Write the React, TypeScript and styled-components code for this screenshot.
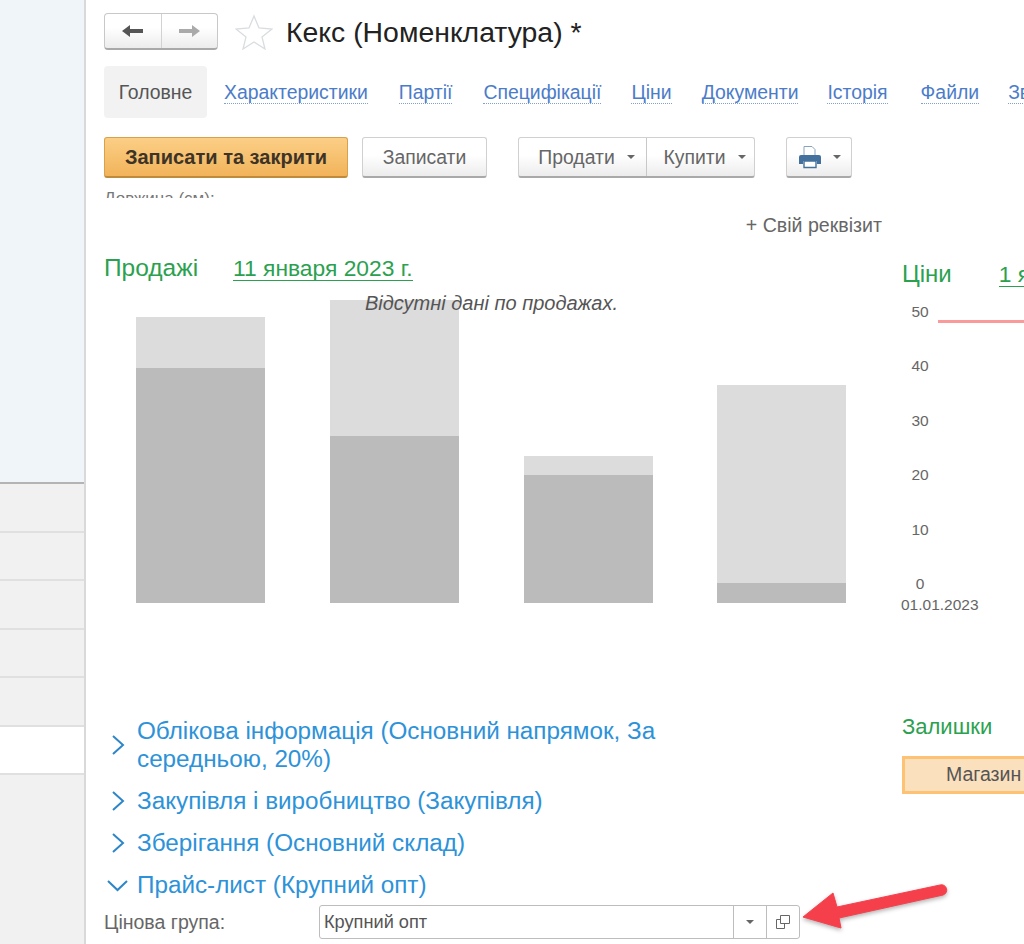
import React from "react";
import styled, { createGlobalStyle } from "styled-components";

const GlobalStyle = createGlobalStyle`
  html, body {
    margin: 0;
    padding: 0;
    background: #fff;
    font-family: "Liberation Sans", Arial, sans-serif;
  }
`;

const Page = styled.div`
  position: relative;
  display: flex;
  width: 1024px;
  height: 944px;
  overflow: hidden;
  background: #fff;
`;

const Sidebar = styled.aside`
  flex: 0 0 84px;
  display: flex;
  flex-direction: column;
  border-right: 2px solid #d9d9d9;
  background: #f1f1f1;
`;

const SidebarTop = styled.div`
  height: 482px;
  background: #eff5f9;
  border-bottom: 2px solid #b4b4b4;
`;

const SidebarRow = styled.div<{ $active?: boolean }>`
  height: 46.5px;
  background: ${(p) => (p.$active ? "#fff" : "#f1f1f1")};
  border-bottom: 2px solid #e0e0e0;
`;

const Main = styled.main`
  flex: 1;
  min-width: 0;
  padding: 13px 0 0 18px;
  display: flex;
  flex-direction: column;
`;

const Header = styled.header`
  display: flex;
  align-items: center;
  height: 37px;
`;

const NavGroup = styled.div`
  display: flex;
  width: 114px;
  height: 37px;
  box-sizing: border-box;
  border: 1px solid #c8c8c8;
  border-bottom: 2px solid #a9a9a9;
  border-radius: 4px;
  background: linear-gradient(#fff 40%, #ececec);
`;

const NavButton = styled.div`
  flex: 1;
  display: flex;
  align-items: center;
  justify-content: center;
  & + & {
    border-left: 1px solid #d2d2d2;
  }
`;

const StarIcon = styled.svg`
  margin-left: 17px;
  width: 38px;
  height: 36px;
`;

const Title = styled.h1`
  margin: 2px 0 0 13px;
  font-size: 28.4px;
  font-weight: 400;
  color: #222;
  white-space: nowrap;
`;

const Tabs = styled.nav`
  display: flex;
  align-items: center;
  margin-top: 16px;
  height: 52px;
  white-space: nowrap;
`;

const ActiveTab = styled.div`
  width: 103px;
  height: 52px;
  flex: none;
  display: flex;
  align-items: center;
  justify-content: center;
  border-radius: 4px;
  background: #f2f2f2;
  color: #555;
  font-size: 19.4px;
`;

const TabLink = styled.a<{ $gap: number }>`
  margin-left: ${(p) => p.$gap}px;
  padding-top: 2px;
  flex: none;
  color: #4b7cc9;
  font-size: 19.4px;
  line-height: 21px;
  border-bottom: 1px dotted #7e9fd8;
`;

const Actions = styled.div`
  display: flex;
  align-items: center;
  margin-top: 19px;
  height: 41px;
`;

const buttonBase = `
  box-sizing: border-box;
  height: 41px;
  display: flex;
  align-items: center;
  justify-content: center;
  border: 1px solid #d0d0d0;
  border-bottom: 2px solid #a9a9a9;
  border-radius: 3px;
  background: linear-gradient(#fff 45%, #ececec);
  color: #666;
  font-size: 19.4px;
`;

const PrimaryButton = styled.div`
  ${buttonBase}
  width: 244px;
  border-color: #d9a14c;
  border-bottom-color: #c08a3c;
  background: linear-gradient(#fbcf86, #f2b35a);
  color: #3d3326;
  font-size: 20px;
  font-weight: 700;
`;

const SaveButton = styled.div`
  ${buttonBase}
  width: 125px;
  margin-left: 14px;
`;

const SplitGroup = styled.div`
  ${buttonBase}
  width: 237px;
  margin-left: 31px;
  justify-content: flex-start;
`;

const SplitPart = styled.div<{ $width: number }>`
  flex: 0 0 ${(p) => p.$width}px;
  box-sizing: border-box;
  height: 100%;
  padding-left: 8px;
  display: flex;
  align-items: center;
  justify-content: center;
  gap: 12px;
  & + & {
    border-left: 1px solid #c8c8c8;
  }
`;

const Caret = styled.span`
  width: 0;
  height: 0;
  border-left: 4px solid transparent;
  border-right: 4px solid transparent;
  border-top: 4px solid #666;
`;

const PrintButton = styled.div`
  ${buttonBase}
  width: 66px;
  margin-left: 31px;
  gap: 11px;
`;

const ClippedField = styled.div`
  margin-top: 6px;
  height: 14px;
  overflow: hidden;
  color: #777;
  font-size: 17px;
  line-height: 14px;
  white-space: nowrap;
  span {
    display: block;
    margin-top: 8px;
  }
`;

const Columns = styled.div`
  display: flex;
  flex: 1;
  min-height: 0;
`;

const LeftColumn = styled.section`
  flex: 0 0 778px;
  display: flex;
  flex-direction: column;
`;

const AddField = styled.div`
  margin-top: 17px;
  text-align: right;
  color: #666;
  font-size: 19.6px;
  line-height: 21px;
`;

const ChartHeader = styled.div`
  display: flex;
  align-items: baseline;
  margin-top: 18px;
  height: 30px;
`;

const SalesHeader = styled(ChartHeader)`
  margin-top: 17px;
`;

const GreenTitle = styled.div<{ $size?: number }>`
  color: #2ba14f;
  font-size: ${(p) => p.$size ?? 24.5}px;
  line-height: 30px;
  white-space: nowrap;
`;

const DateLink = styled.a<{ $gap: number }>`
  margin-left: ${(p) => p.$gap}px;
  color: #2ba14f;
  font-size: 22.8px;
  line-height: 24px;
  white-space: nowrap;
  border-bottom: 1px solid #2ba14f;
`;

const SalesChart = styled.div`
  position: relative;
  height: 312px;
  margin-top: 9px;
`;

const Bars = styled.svg`
  display: block;
`;

const NoData = styled.div`
  position: absolute;
  left: 261px;
  top: 0;
  color: #555;
  font-size: 20px;
  font-style: italic;
  line-height: 22px;
  white-space: nowrap;
`;

const Sections = styled.div`
  margin-top: 113px;
  display: flex;
  flex-direction: column;
  gap: 14px;
`;

const SectionRow = styled.div`
  display: flex;
  align-items: center;
  color: #2d92d8;
  font-size: 24.25px;
  line-height: 28px;
  white-space: nowrap;
`;

const Chevron = styled.svg`
  flex: none;
  width: 33px;
  height: 24px;
`;

const PriceRow = styled.div`
  display: flex;
  align-items: center;
  margin-top: 6px;
  height: 34px;
`;

const FieldLabel = styled.label`
  flex: 0 0 215px;
  color: #666;
  font-size: 19.5px;
`;

const FieldBox = styled.div`
  box-sizing: border-box;
  width: 481px;
  height: 34px;
  display: flex;
  border: 1px solid #bdbdbd;
  border-radius: 3px;
  background: #fff;
`;

const FieldValue = styled.div`
  flex: 1;
  padding-left: 4px;
  display: flex;
  align-items: center;
  color: #555;
  font-size: 18.2px;
`;

const FieldAddon = styled.div`
  flex: 0 0 32px;
  display: flex;
  align-items: center;
  justify-content: center;
  border-left: 1px solid #bdbdbd;
`;

const RightColumn = styled.section`
  flex: 1;
  min-width: 0;
  padding: 43px 0 0 20px;
  display: flex;
  flex-direction: column;
  white-space: nowrap;
`;

const PriceChart = styled.div`
  position: relative;
  margin-top: 13px;
`;

const AxisLabels = styled.div`
  display: flex;
  flex-direction: column;
  width: 36px;
  text-align: center;
  color: #666;
  font-size: 15.5px;
`;

const AxisLabel = styled.div`
  height: 54.4px;
  line-height: 20px;
`;

const PriceLine = styled.div`
  position: absolute;
  left: 36px;
  right: 0;
  top: 18px;
  height: 3px;
  background: #fb9a9a;
`;

const AxisDate = styled.div`
  margin-top: -33px;
  margin-left: -1px;
  color: #666;
  font-size: 15.5px;
  line-height: 20px;
`;

const StockBlock = styled.div`
  margin-top: 97px;
`;

const StockButton = styled.div`
  box-sizing: border-box;
  margin-top: 14px;
  width: 140px;
  height: 38px;
  padding-left: 41px;
  border: 3px solid #fdc274;
  background: #fbe0bd;
  color: #555;
  font-size: 19.5px;
  line-height: 31px;
`;

const RedArrow = styled.svg`
  position: absolute;
  left: 795px;
  top: 875px;
  width: 160px;
  height: 65px;
  filter: drop-shadow(0 2px 2px rgba(0, 0, 0, 0.3));
`;

const bars = [
  { x: 32, top: 25, split: 76 },
  { x: 226, top: 8, split: 144 },
  { x: 420, top: 164, split: 183 },
  { x: 613, top: 93, split: 291 },
];

const tabs = [
  { label: "Характеристики", gap: 17 },
  { label: "Партії", gap: 31 },
  { label: "Специфікації", gap: 31 },
  { label: "Ціни", gap: 30 },
  { label: "Документи", gap: 30 },
  { label: "Історія", gap: 29 },
  { label: "Файли", gap: 33 },
  { label: "Зв'язки", gap: 29 },
];

const ChevronRight = () => (
  <Chevron viewBox="0 0 33 24">
    <path d="M9 3l10 9-10 9" fill="none" stroke="#2d86c8" strokeWidth="2" />
  </Chevron>
);

const ChevronDown = () => (
  <Chevron viewBox="0 0 33 24">
    <path d="M4 8l9.500 9 9.500-9" fill="none" stroke="#2d86c8" strokeWidth="2" />
  </Chevron>
);

export default function App() {
  return (
    <Page>
      <GlobalStyle />
      <Sidebar>
        <SidebarTop />
        <SidebarRow />
        <SidebarRow />
        <SidebarRow />
        <SidebarRow />
        <SidebarRow />
        <SidebarRow $active />
      </Sidebar>
      <Main>
        <Header>
          <NavGroup>
            <NavButton>
              <svg width="24" height="16" viewBox="0 0 24 16">
                <path d="M1 8l8-6v4h13v4H9v4z" fill="#555" />
              </svg>
            </NavButton>
            <NavButton>
              <svg width="24" height="16" viewBox="0 0 24 16">
                <path d="M23 8l-8-6v4H2v4h13v4z" fill="#aaa" />
              </svg>
            </NavButton>
          </NavGroup>
          <StarIcon viewBox="0 0 38 36">
            <path
              d="M19 2l5 12 13 1-10 8 3 12-11-7-11 7 3-12L1 15l13-1z"
              fill="#fff"
              stroke="#d9dde0"
              strokeWidth="1.3"
            />
          </StarIcon>
          <Title>Кекс (Номенклатура) *</Title>
        </Header>

        <Tabs>
          <ActiveTab>Головне</ActiveTab>
          {tabs.map((t) => (
            <TabLink key={t.label} $gap={t.gap}>
              {t.label}
            </TabLink>
          ))}
        </Tabs>

        <Actions>
          <PrimaryButton>Записати та закрити</PrimaryButton>
          <SaveButton>Записати</SaveButton>
          <SplitGroup>
            <SplitPart $width={127}>
              Продати <Caret />
            </SplitPart>
            <SplitPart $width={108}>
              Купити <Caret />
            </SplitPart>
          </SplitGroup>
          <PrintButton>
            <svg width="24" height="24" viewBox="0 0 24 24">
              <path d="M6 1.500h8l3 3V12H6z" fill="#fff" stroke="#8aa3bd" strokeWidth="1" />
              <path d="M3 10h18a2 2 0 0 1 2 2v7h-4v-3H5v3H1v-7a2 2 0 0 1 2-2z" fill="#44709d" />
              <path d="M6 16h12v6.500H6z" fill="#fff" stroke="#44709d" strokeWidth="1.4" />
            </svg>
            <Caret />
          </PrintButton>
        </Actions>

        <ClippedField>
          <span>Довжина (см):</span>
        </ClippedField>

        <Columns>
          <LeftColumn>
            <AddField>+ Свій реквізит</AddField>
            <SalesHeader>
              <GreenTitle>Продажі</GreenTitle>
              <DateLink $gap={35}>11 января 2023 г.</DateLink>
            </SalesHeader>
            <SalesChart>
              <Bars width="778" height="312">
                {bars.map((b) => (
                  <g key={b.x}>
                    <rect x={b.x} y={b.top} width="129" height={b.split - b.top} fill="#dcdcdc" />
                    <rect x={b.x} y={b.split} width="129" height={311 - b.split} fill="#bbbbbb" />
                  </g>
                ))}
              </Bars>
              <NoData>Відсутні дані по продажах.</NoData>
            </SalesChart>
            <Sections>
              <SectionRow>
                <ChevronRight />
                <div>
                  Облікова інформація (Основний напрямок, За
                  <br />
                  середньою, 20%)
                </div>
              </SectionRow>
              <SectionRow>
                <ChevronRight />
                Закупівля і виробництво (Закупівля)
              </SectionRow>
              <SectionRow>
                <ChevronRight />
                Зберігання (Основний склад)
              </SectionRow>
              <SectionRow>
                <ChevronDown />
                Прайс-лист (Крупний опт)
              </SectionRow>
            </Sections>
            <PriceRow>
              <FieldLabel>Цінова група:</FieldLabel>
              <FieldBox>
                <FieldValue>Крупний опт</FieldValue>
                <FieldAddon>
                  <Caret />
                </FieldAddon>
                <FieldAddon>
                  <svg width="16" height="16" viewBox="0 0 16 16" fill="none" stroke="#666" strokeWidth="1">
                    <path d="M5.500 1.500h9v8h-9z" />
                    <path d="M5.500 5.500h-4v9h8v-5" />
                  </svg>
                </FieldAddon>
              </FieldBox>
            </PriceRow>
          </LeftColumn>

          <RightColumn>
            <ChartHeader>
              <GreenTitle $size={24}>Ціни</GreenTitle>
              <DateLink $gap={47}>1 января 2023 г.</DateLink>
            </ChartHeader>
            <PriceChart>
              <AxisLabels>
                {[50, 40, 30, 20, 10, 0].map((v) => (
                  <AxisLabel key={v}>{v}</AxisLabel>
                ))}
              </AxisLabels>
              <PriceLine />
              <AxisDate>01.01.2023</AxisDate>
            </PriceChart>
            <StockBlock>
              <GreenTitle $size={22}>Залишки</GreenTitle>
              <StockButton>Магазин</StockButton>
            </StockBlock>
          </RightColumn>
        </Columns>
      </Main>
      <RedArrow viewBox="0 0 160 65">
        <path
          d="M8 42L38 18l4 14 103-22a5 5 0 0 1 3 10L44 43l2 10z"
          fill="#f5404c"
          stroke="#f5404c"
          strokeWidth="1"
          strokeLinejoin="round"
        />
      </RedArrow>
    </Page>
  );
}
